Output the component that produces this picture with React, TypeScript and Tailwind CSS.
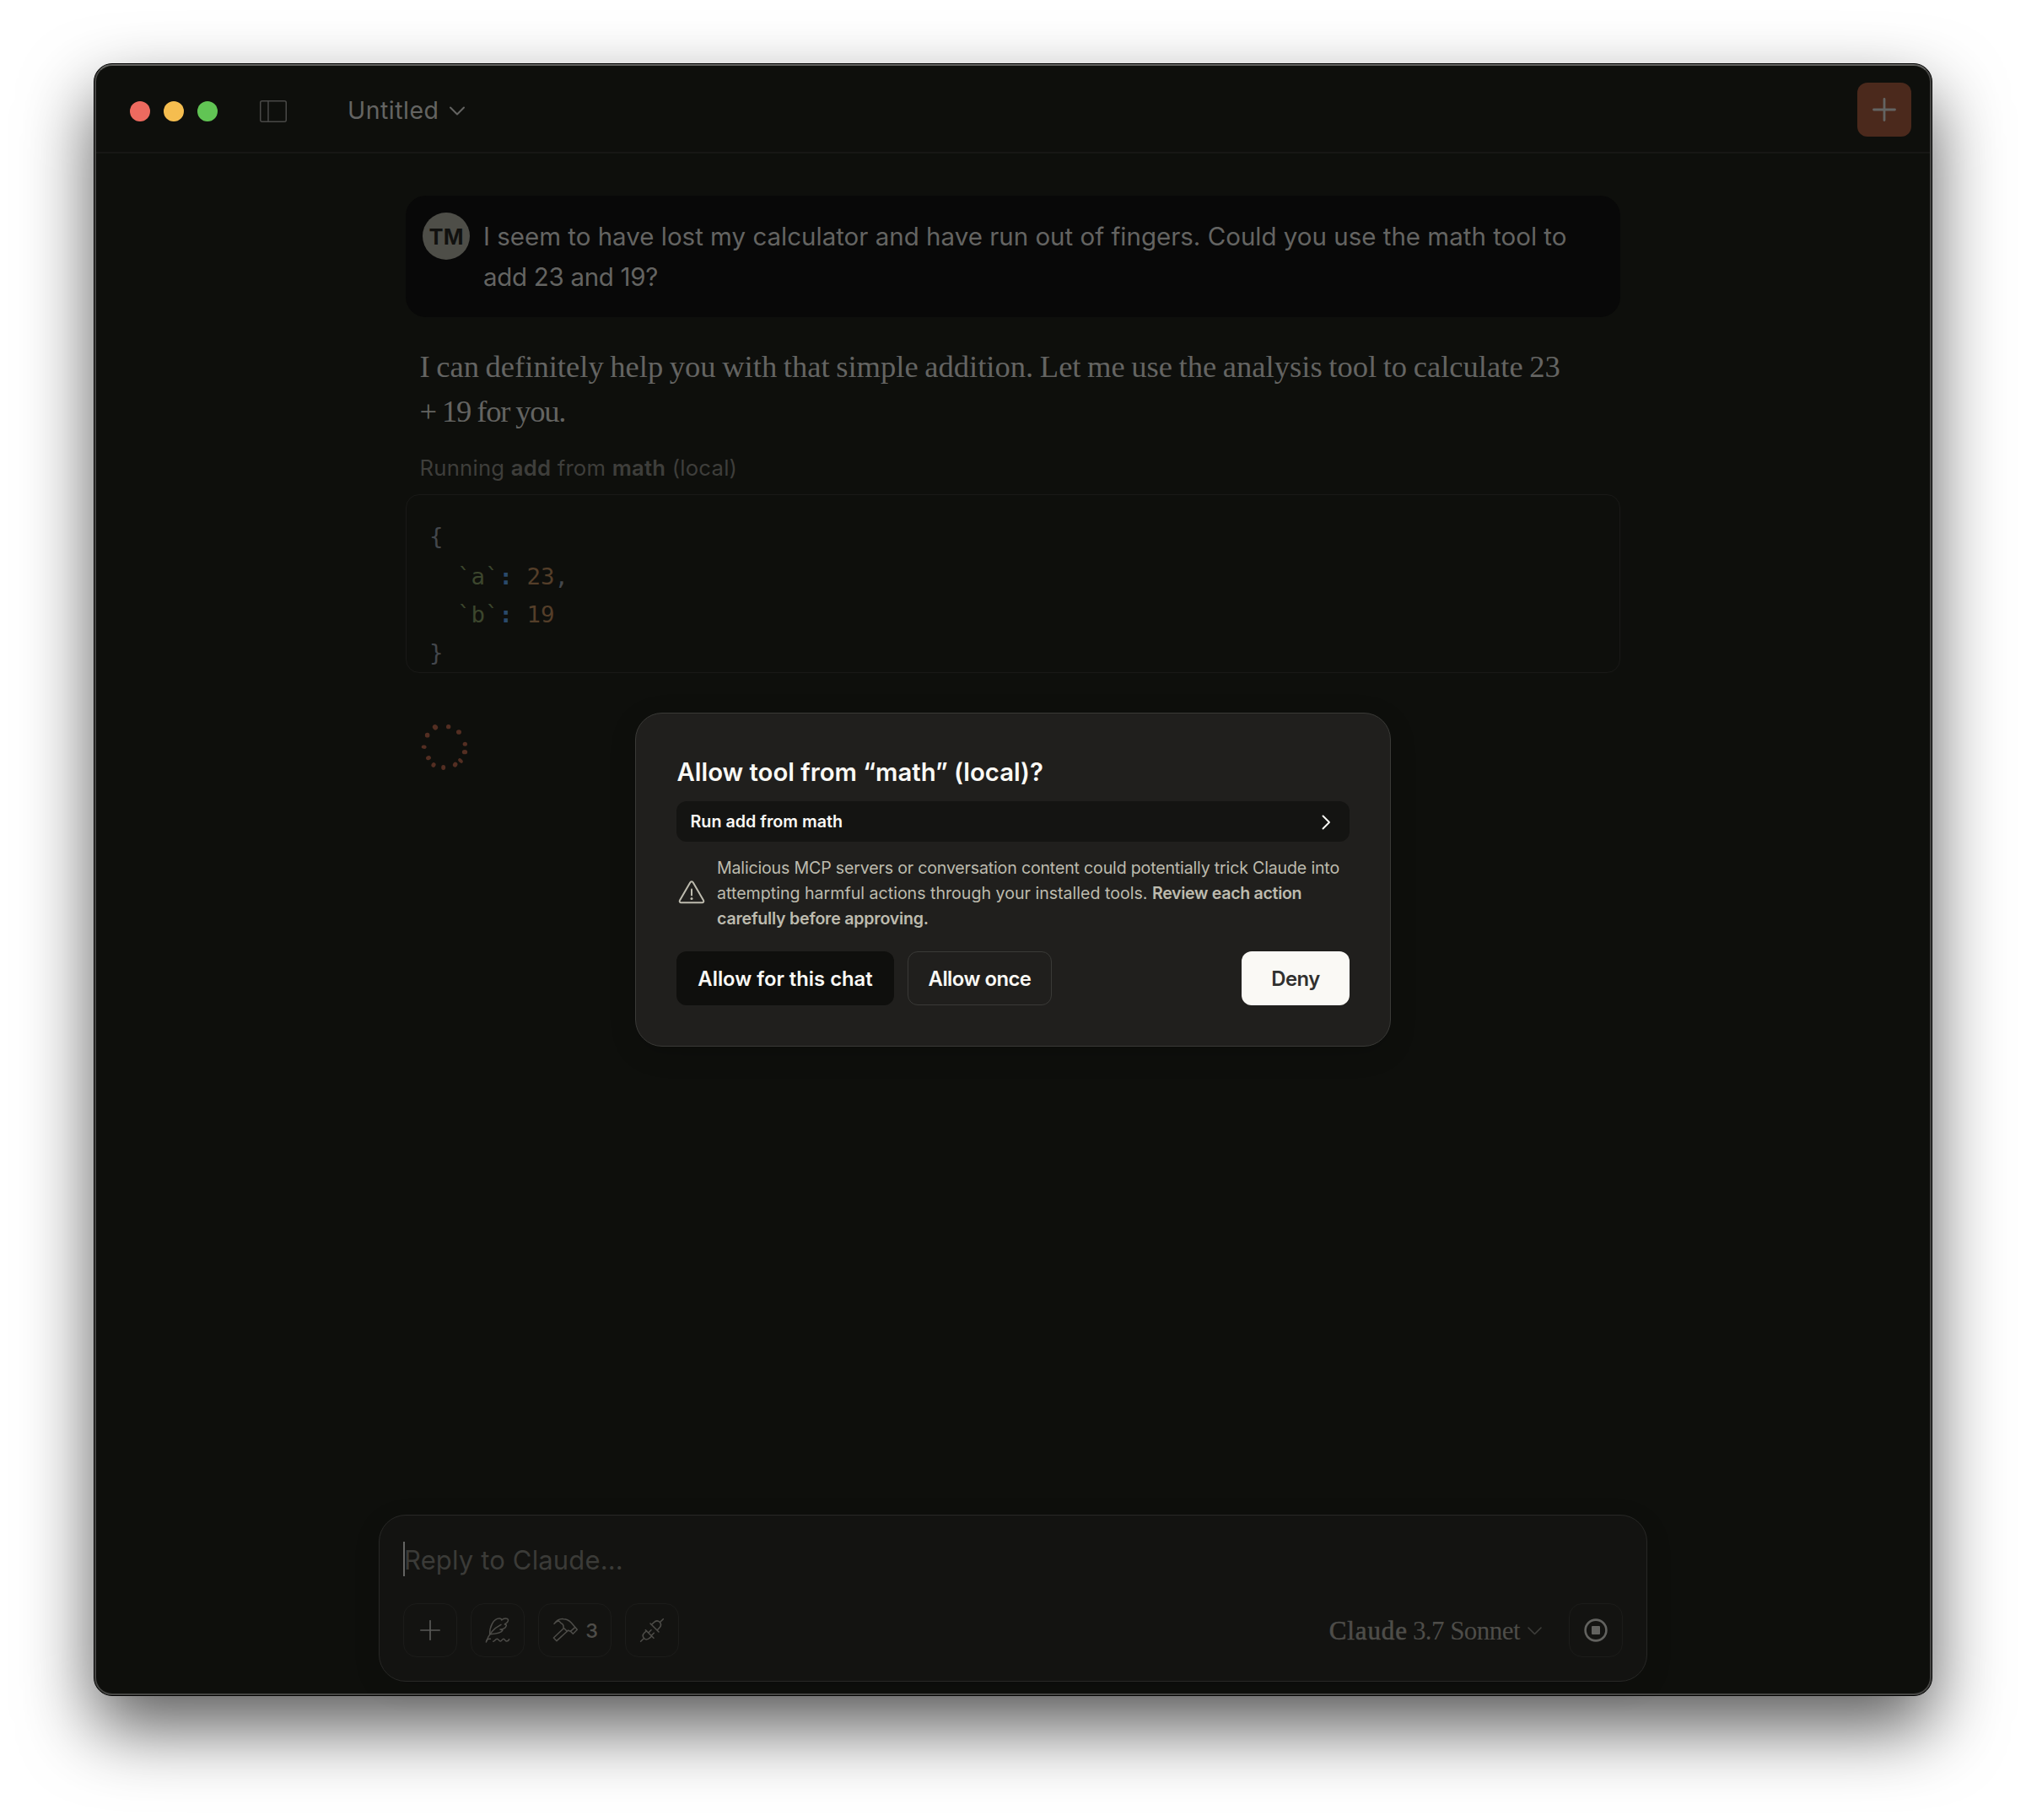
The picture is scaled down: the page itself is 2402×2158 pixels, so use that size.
import React from "react";

const DOTS: [number, number, number, number, number][] = [
  [78, 37, 9, 10, -35],
  [125, 35, 8, 8, 0],
  [162, 54, 9, 8.5, 0],
  [184, 97, 8, 7.5, 0],
  [183, 125, 9.5, 8, 0],
  [168, 156, 10, 6, 45],
  [149, 170, 8, 9, 30],
  [107, 180, 7.5, 9, 0],
  [72, 171, 7.5, 8.5, 30],
  [54, 146, 9, 7.5, -20],
  [38, 107, 9, 6.5, 10],
  [50, 65, 8.5, 8.5, 0],
];

function Spinner() {
  return (
    <svg className="mt-[52px] ml-[9px] h-[70px] w-[80px] fill-[#532e22]" viewBox="0 0 240 210">
      {DOTS.map(([x, y, rx, ry, r]) => (
        <ellipse key={`${x}-${y}`} cx={x} cy={y} rx={rx} ry={ry} transform={`rotate(${r} ${x} ${y})`} />
      ))}
    </svg>
  );
}

function SidebarIcon() {
  return (
    <svg className="mt-1 ml-[50px] h-[26px] w-[32px]" viewBox="0 0 32 26" fill="none" stroke="#494947" strokeWidth="1.5">
      <rect x="0.75" y="0.75" width="30.5" height="24.5" rx="2" />
      <path d="M10 1v24" />
    </svg>
  );
}

function FeatherIcon() {
  return (
    <svg className="size-8" viewBox="0 0 96 96" fill="none" stroke="#4e4d49" strokeWidth="4.5" strokeLinecap="round" strokeLinejoin="round">
      <path d="M7 90C16 62 32 42 60 28" />
      <path d="M20 62C19 38 32 6 54 6c5 0 8 2 8 6 4-4 10-6 14-6 11 0 12 7 6 14-2 3-7 5-9 7 3 0 6 1 6 4-2 8-9 13-22 14 4 1 8 1 9 3-5 11-28 13-46 14z" />
      <path d="M8 86c2-6 6-9 14-7M32 88c6 0 8-9 14-9s6 8 12 8c5 0 6-8 11-8s5 8 10 8 9-3 10-7" />
    </svg>
  );
}

function HammerIcon() {
  return (
    <svg className="size-8" viewBox="0 0 96 96" fill="none" stroke="#4e4d49" strokeWidth="4.5" strokeLinecap="round" strokeLinejoin="round">
      <path d="M42 42L7 75l11 11 38-35" />
      <path d="M9 25C18 12 30 7 42 8c12 0 20 5 27 12l22 26-15 15-10-11c-3 2-5 0-7-2l-4 4-13-13c2-9-4-15-8-16L26 15c-7 0-12 4-17 10z" />
      <path d="M83 38L67 52" />
    </svg>
  );
}

function PlugIcon() {
  return (
    <svg className="size-8" viewBox="0 0 96 96" fill="none" stroke="#4e4d49" strokeWidth="4.5" strokeLinecap="round" strokeLinejoin="round">
      <path d="M8 88l12-12M25 47l29 29M29 50l-8 7c-7 7-6 15-1 20s13 5 19-1l8-7M36 56l9-9M46 67l9-9" />
      <path d="M88 8L78 18M42 24l30 30M47 28l7-7c7-7 15-8 21-2s6 14-1 21l-7 7" />
    </svg>
  );
}

function WarningIcon() {
  return (
    <svg className="size-9 shrink-0" viewBox="0 0 36 36" fill="none" stroke="#bdbbae" strokeWidth="2" strokeLinecap="round" strokeLinejoin="round">
      <path d="M16.2 5.4L4 26.6c-.8 1.4 0 2.6 1.6 2.6h24.8c1.6 0 2.4-1.2 1.6-2.6L19.8 5.4c-.8-1.4-2.8-1.4-3.6 0z" />
      <path d="M18 13.5v7" />
      <circle cx="18" cy="24.6" r="1.5" fill="#bdbbae" stroke="none" />
    </svg>
  );
}

function Header() {
  return (
    <header className="flex h-[106px] items-center border-b-2 border-[#171715] pt-1 pr-6 pl-[42px]">
      <div className="mt-1 flex gap-4">
        <span className="size-6 rounded-full bg-[#ee6a5f]" />
        <span className="size-6 rounded-full bg-[#f5bd4f]" />
        <span className="size-6 rounded-full bg-[#61c454]" />
      </div>
      <SidebarIcon />
      <div className="mt-[3px] ml-[72px] flex items-center text-[28.5px] tracking-[0.5px] text-[#646462]">
        Untitled
        <svg className="ml-[11px] h-[11px] w-[20px]" viewBox="0 0 20 11" fill="none" stroke="#646462" strokeWidth="2" strokeLinecap="round" strokeLinejoin="round">
          <path d="M2 1.5l8 8 8-8" />
        </svg>
      </div>
      <button className="ml-auto flex size-16 items-center justify-center rounded-xl bg-[#4b291c]">
        <svg className="size-7" viewBox="0 0 28 28" stroke="#646462" strokeWidth="2.8" strokeLinecap="round">
          <path d="M14 1.5v25M1.5 14h25" />
        </svg>
      </button>
    </header>
  );
}

function Conversation() {
  return (
    <main className="mx-auto flex w-[1440px] flex-1 flex-col pt-[50px]">
      <section className="flex h-36 rounded-3xl bg-[#080808] p-5">
        <div className="flex size-14 shrink-0 items-center justify-center rounded-full bg-[#4e4e48] pt-[2px] text-[25.5px] font-bold text-[#11110f]">TM</div>
        <p className="mt-1 ml-4 text-[29.5px] leading-[48px] whitespace-nowrap text-[#646462]">
          <span className="block">I seem to have lost my calculator and have run out of fingers. Could you use the math tool to</span>
          <span className="block tracking-[-0.3px]">add 23 and 19?</span>
        </p>
      </section>
      <p className="mt-[33px] pl-[16.5px] font-['Liberation_Serif',serif] text-[36.6px] leading-[52.5px] whitespace-nowrap text-[#646462]">
        <span className="block [word-spacing:-1.6px]">I can definitely help you with that simple addition. Let me use the analysis tool to calculate 23</span>
        <span className="block tracking-[-1.3px] [word-spacing:-0.6px]">+ 19 for you.</span>
      </p>
      <p className="mt-[23px] pl-[16.5px] text-[25.7px] leading-9 tracking-[0.22px] text-[#3e3e3b]">
        Running <b className="font-semibold">add</b> from <b className="font-semibold">math</b> (local)
      </p>
      <div className="mt-[13px] h-[212px] rounded-2xl border border-[#191917] pt-[26px] pl-[27px] font-['DejaVu_Sans_Mono',monospace] text-[27.4px] leading-[45px] whitespace-pre text-[#44474c]">
        <div className="mb-[3px]">{"{"}</div>
        <div>
          {"  "}
          <span className="text-[#3c462d]">`a`</span>
          <b className="text-[#2a4a6b]">:</b> <span className="text-[#543e29]">23</span>,
        </div>
        <div>
          {"  "}
          <span className="text-[#3c462d]">`b`</span>
          <b className="text-[#2a4a6b]">:</b> <span className="text-[#543e29]">19</span>
        </div>
        <div>{"}"}</div>
      </div>
      <Spinner />
    </main>
  );
}

function Composer() {
  const tool = "flex h-16 items-center justify-center rounded-2xl border border-[#1c1c1a]";
  return (
    <footer className="mx-auto mb-4 h-[198px] w-[1504px] rounded-[32px] border border-[#282826] bg-[#131311] px-7 pt-[31px] shadow-[0_8px_32px_rgba(0,0,0,0.12)]">
      <div className="flex h-[41px] items-center text-[31px] tracking-[0.15px] text-[#3b3b38]">
        <span className="h-[41px] w-[2px] bg-[#646462]" />
        <span className="mt-[3px] -ml-px">Reply to Claude...</span>
      </div>
      <div className="mt-8 flex items-center gap-4">
        <button className={`${tool} w-16`}>
          <svg className="size-6" viewBox="0 0 24 24" stroke="#5a5a57" strokeWidth="1.7" strokeLinecap="round">
            <path d="M12 .8v22.4M.8 12h22.4" />
          </svg>
        </button>
        <button className={`${tool} w-16`}>
          <FeatherIcon />
        </button>
        <button className={`${tool} w-[87px] gap-2 text-[23.5px] font-medium text-[#4e4d49]`}>
          <HammerIcon />
          <span className="pt-0.5">3</span>
        </button>
        <button className={`${tool} w-16`}>
          <PlugIcon />
        </button>
        <div className="ml-auto flex items-center pt-0.5 font-['Liberation_Serif',serif] text-[31px] text-[#4e4d49]">
          <span className="tracking-[0.9px] [-webkit-text-stroke:0.6px_#4e4d49]">Claude</span>
          <span className="ml-[6px] tracking-[-0.55px]">3.7 Sonnet</span>
          <svg className="ml-[9px] h-[10px] w-[17px]" viewBox="0 0 17 10" fill="none" stroke="#3e3e3b" strokeWidth="1.6" strokeLinecap="round" strokeLinejoin="round">
            <path d="M1 1l7.500 7.500L16 1" />
          </svg>
        </div>
        <button className={`${tool} ml-[16px] w-16`}>
          <svg className="size-7" viewBox="0 0 28 28" fill="none" stroke="#62625f" strokeWidth="2.6">
            <circle cx="14" cy="14" r="12.4" />
            <rect x="9" y="9" width="10" height="10" rx="1" fill="#62625f" stroke="none" />
          </svg>
        </button>
      </div>
    </footer>
  );
}

function PermissionDialog() {
  return (
    <div className="absolute inset-0 flex items-center justify-center">
      <div className="h-[396px] w-[896px] rounded-[32px] border border-[#3a3a37] bg-[#201f1d] px-12 pt-[49px] text-[#faf9f5] shadow-[0_8px_32px_rgba(0,0,0,0.16)]">
        <h2 className="pt-px pl-[0.5px] text-[29.3px] leading-10 font-semibold whitespace-nowrap">Allow tool from “math” (local)?</h2>
        <div className="mt-[14px] flex h-12 items-center justify-between rounded-xl bg-[#141412] pt-px pr-[22px] pl-[16.5px] text-[19.7px] font-semibold">
          Run add from math
          <svg className="h-[18px] w-[11px]" viewBox="0 0 11 18" fill="none" stroke="#faf9f5" strokeWidth="1.9" strokeLinecap="round" strokeLinejoin="round">
            <path d="M1.5 1.5L9 9l-7.5 7.5" />
          </svg>
        </div>
        <div className="mt-4 flex items-center gap-3 text-[19.6px] leading-[30px] whitespace-nowrap text-[#bdbbae]">
          <WarningIcon />
          <p>
            <span className="block tracking-[-0.18px]">Malicious MCP servers or conversation content could potentially trick Claude into</span>
            <span className="block">
              attempting harmful actions through your installed tools. <b className="font-semibold tracking-[-0.32px]">Review each action</b>
            </span>
            <b className="block font-semibold tracking-[-0.22px]">carefully before approving.</b>
          </p>
        </div>
        <div className="mt-6 flex gap-4 text-[23.8px] font-semibold whitespace-nowrap">
          <button className="h-16 w-[258px] rounded-xl bg-[#0f0f0d] pt-px">Allow for this chat</button>
          <button className="h-16 w-[171px] rounded-xl border border-[#3a3a37] pt-px tracking-[-0.5px]">Allow once</button>
          <button className="ml-auto h-16 w-32 rounded-xl bg-[#faf9f5] pt-px tracking-[-0.5px] text-[#30302e]">Deny</button>
        </div>
      </div>
    </div>
  );
}

export default function App() {
  return (
    <div className="flex h-[2158px] w-[2402px] items-start overflow-hidden bg-white pt-[75px] pl-[111px] font-['Inter',sans-serif]">
      <div className="relative flex h-[1936px] w-[2180px] flex-col rounded-[22px] border border-black bg-[#0e0f0c] shadow-[0_38px_84px_rgba(0,0,0,0.64)]">
        <Header />
        <Conversation />
        <Composer />
        <div className="pointer-events-none absolute inset-0 rounded-[21px] border-2 border-[#464644] border-t-[#62625f]" />
        <PermissionDialog />
      </div>
    </div>
  );
}
